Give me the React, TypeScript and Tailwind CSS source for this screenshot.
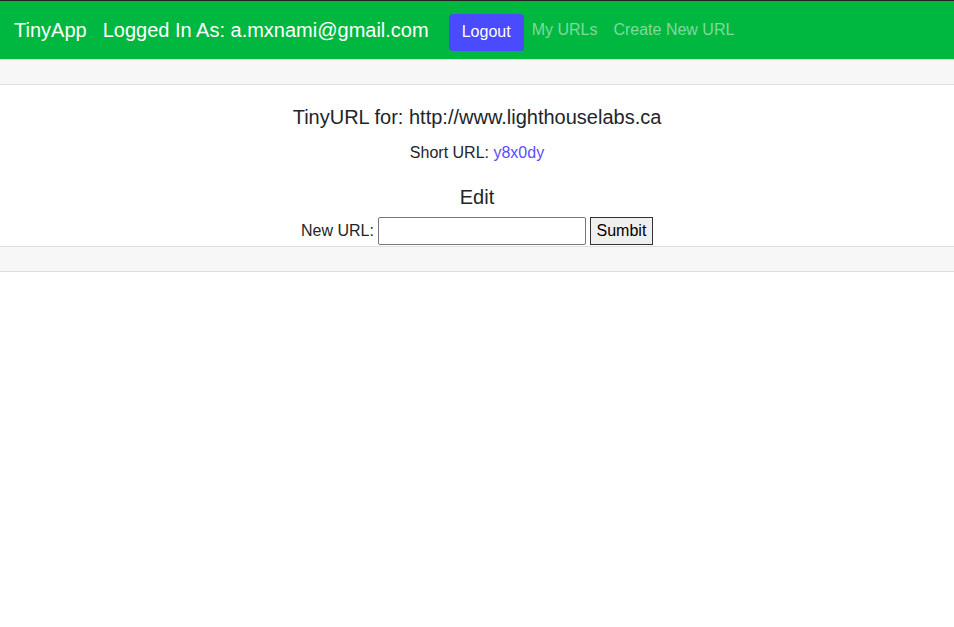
export default function App() {
  return (
    <div className="min-h-[627px] bg-white font-['Liberation_Sans',Arial,sans-serif] text-[#212529]">
      <nav className="flex h-[59px] items-center border-t border-[#222] bg-[#00b83f] pl-[14px]">
        <a className="mr-4 text-[20px] leading-[30px] text-white">TinyApp</a>
        <span className="text-[20px] leading-[30px] text-white">Logged In As: a.mxnami@gmail.com</span>
        <button className="mt-[4px] ml-[20px] h-[37px] w-[75px] rounded-[4px] bg-[#4a4aff] text-[16px] text-white">
          Logout
        </button>
        <a className="px-2 text-[16px] leading-[24px] text-[#80d99d]">My URLs</a>
        <a className="px-2 text-[16px] leading-[24px] text-[#80d99d]">Create New URL</a>
      </nav>

      <div className="border-y border-[#dedede]">
        <div className="h-[25px] border-b border-[#dedede] bg-[#f7f7f7]"></div>
        <div className="flex flex-col items-center pt-[20px] pb-[1px] text-center">
          <h5 className="text-[20px] leading-[24px]">TinyURL for: http://www.lighthouselabs.ca</h5>
          <p className="mt-[12px] text-[16px] leading-[24px]">
            Short URL: <a className="text-[#5a4cff]">y8x0dy</a>
          </p>
          <h5 className="mt-[20px] text-[20px] leading-[24px]">Edit</h5>
          <form className="mt-[8px] flex h-[28px] items-center text-[16px]">
            <label className="mr-[4px]">New URL:</label>
            <input type="text" className="h-[28px] w-[208px] rounded-[2px] border border-[#767676] bg-white px-1" />
            <button type="button" className="ml-[4px] h-[28px] w-[63px] border border-[#333] bg-[#efefef] text-[16px] text-black">
              Sumbit
            </button>
          </form>
        </div>
        <div className="h-[25px] border-t border-[#dedede] bg-[#f7f7f7]"></div>
      </div>
    </div>
  )
}
